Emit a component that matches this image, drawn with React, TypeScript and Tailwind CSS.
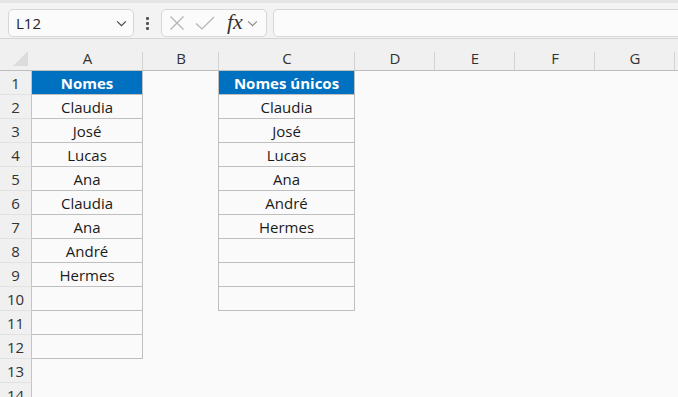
import React from 'react';

const colA = ['Nomes', 'Claudia', 'José', 'Lucas', 'Ana', 'Claudia', 'Ana', 'André', 'Hermes', '', '', ''];
const colC = ['Nomes únicos', 'Claudia', 'José', 'Lucas', 'Ana', 'André', 'Hermes', '', '', ''];

const headers = [
  { label: 'A', w: 'w-[111px]' },
  { label: 'B', w: 'w-[76px]' },
  { label: 'C', w: 'w-[136px]' },
  { label: 'D', w: 'w-[80px]' },
  { label: 'E', w: 'w-[80px]' },
  { label: 'F', w: 'w-[80px]' },
  { label: 'G', w: 'w-[80px]' },
];

const Chevron = ({ className }: { className?: string }) => (
  <svg viewBox="0 0 12 8" className={className} fill="none" stroke="currentColor" strokeWidth="1.3">
    <path d="M1 1.5 6 6.5 11 1.5" />
  </svg>
);

const App: React.FC = () => {
  const rows = Array.from({ length: 14 }, (_, i) => i);

  return (
    <div className="w-[678px] h-[397px] overflow-hidden bg-[#fafafa] font-['Open_Sans',sans-serif] text-[#1a1a1a]">
      {/* barra de fórmulas */}
      <div className="h-[39px] bg-[#f3f3f3] border-t-[3px] border-[#e5e5e5] border-b border-b-[#d4d4d4] flex items-start pt-[6px] pl-[8px] gap-0">
        <div className="w-[126px] h-[28px] rounded-[5px] border border-[#d6d6d6] bg-[#fbfbfb] flex items-center justify-between pl-[7px] pr-[6px]">
          <span className="text-[15px] text-[#222]">L12</span>
          <Chevron className="w-[11px] h-[7px] text-[#444]" />
        </div>
        <div className="w-[27px] h-[28px] flex flex-col items-center justify-center gap-[2px]">
          <span className="w-[3px] h-[3px] bg-[#555] rounded-[1px]" />
          <span className="w-[3px] h-[3px] bg-[#555] rounded-[1px]" />
          <span className="w-[3px] h-[3px] bg-[#555] rounded-[1px]" />
        </div>
        <div className="w-[106px] h-[28px] rounded-[5px] border border-[#d6d6d6] bg-[#fbfbfb] flex items-center pl-[7px]">
          <svg viewBox="0 0 16 16" className="w-[16px] h-[16px] text-[#b3b3b3]" fill="none" stroke="currentColor" strokeWidth="1.2">
            <path d="M1.5 1.5 14.5 14.5M14.5 1.5 1.5 14.5" />
          </svg>
          <svg viewBox="0 0 20 16" className="w-[20px] h-[16px] ml-[10px] text-[#b3b3b3]" fill="none" stroke="currentColor" strokeWidth="1.2">
            <path d="M1 8.5 7 14 19 2" />
          </svg>
          <span className="ml-[12px] font-['Liberation_Serif',serif] italic text-[22px] leading-none text-[#333] -mt-[3px]">fx</span>
          <Chevron className="ml-[4px] w-[11px] h-[7px] text-[#888]" />
        </div>
        <div className="ml-[6px] flex-1 h-[28px] rounded-l-[5px] border border-r-0 border-[#d6d6d6] bg-[#fbfbfb]" />
      </div>

      {/* cabeçalho das colunas */}
      <div className="flex h-[32px] bg-[#f0f0f0] border-b border-[#bdbdbd]">
        <div className="w-[32px] shrink-0 relative">
          <svg viewBox="0 0 16 16" className="absolute left-[13px] top-[12px] w-[15px] h-[15px]">
            <path d="M16 0 16 16 0 16Z" fill="#dcdcdc" />
          </svg>
        </div>
        {headers.map((h) => (
          <div
            key={h.label}
            className={`${h.w} shrink-0 relative flex items-end justify-center pb-[1px] text-[15px] text-[#333] after:absolute after:right-0 after:bottom-0 after:h-[18px] after:w-px after:bg-[#d3d3d3]`}
          >
            {h.label}
          </div>
        ))}
        <div className="flex-1" />
      </div>

      {/* linhas */}
      {rows.map((i) => {
        const a = i < colA.length ? colA[i] : null;
        const c = i < colC.length ? colC[i] : null;
        const head = i === 0;
        return (
          <div key={i} className="flex h-[24px] text-[15px]">
            <div className="w-[32px] shrink-0 bg-[#f0f0f0] border-r border-[#c4c4c4] border-b border-b-[#e2e2e2] flex items-center justify-center pt-[1px] text-[#333]">
              {i + 1}
            </div>
            <div
              className={`w-[111px] shrink-0 flex items-center justify-center pt-[1px] ${
                a === null
                  ? ''
                  : head
                  ? 'bg-[#0070c0] text-white font-bold border-r border-b border-[#bfbfbf]'
                  : 'border-r border-b border-[#bfbfbf]'
              }`}
            >
              {a}
            </div>
            <div className="w-[75px] shrink-0" />
            <div
              className={`w-[137px] shrink-0 flex items-center justify-center pt-[1px] ${
                c === null
                  ? ''
                  : head
                  ? 'bg-[#0070c0] text-white font-bold border-x border-b border-[#bfbfbf]'
                  : 'border-x border-b border-[#bfbfbf]'
              }`}
            >
              {c}
            </div>
            <div className="flex-1" />
          </div>
        );
      })}
    </div>
  );
};

export default App;
